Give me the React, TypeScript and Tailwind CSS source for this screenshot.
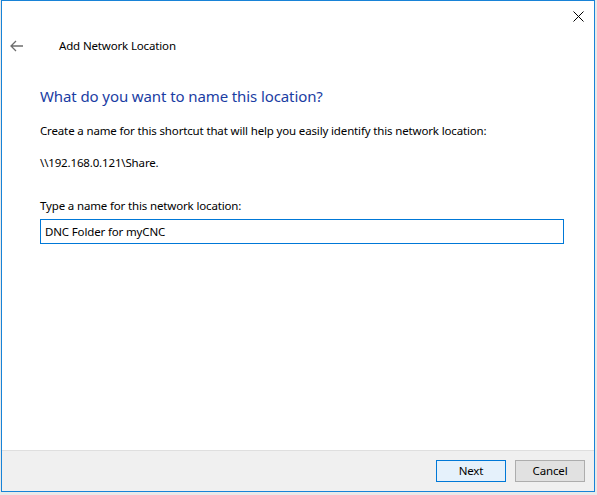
import React, { useState } from 'react';

const font = { fontFamily: '"Noto Sans", "Open Sans", sans-serif' };

const App: React.FC = () => {
    const [locationName, setLocationName] = useState('DNC Folder for myCNC');

    return (
        <div className="w-[597px] h-[495px] bg-[#e9e9e9] overflow-hidden" style={font}>
            <div className="ml-[1px] w-[594px] h-[492px] border border-[#1883d7] bg-white flex flex-col">
                {/* title bar */}
                <div className="h-[29px] flex justify-end items-start">
                    <button className="w-[30px] h-[28px] mt-[1px] mr-[1px] flex items-center justify-center text-black">
                        <svg width="11" height="11" viewBox="0 0 11 11">
                            <path d="M0.5 0.5 L10.5 10.5 M10.5 0.5 L0.5 10.5" stroke="#000" strokeWidth="1" />
                        </svg>
                    </button>
                </div>

                {/* header */}
                <div className="h-[31px] flex items-center">
                    <div className="w-[57px] pl-[8px] flex items-center">
                        <svg width="14" height="12" viewBox="0 0 14 12">
                            <path d="M1 6 H13 M6 1 L1 6 L6 11" stroke="#6d6d6d" strokeWidth="1.3" fill="none" />
                        </svg>
                    </div>
                    <span className="text-[11.5px] tracking-[-0.15px] leading-4 text-black">Add Network Location</span>
                </div>

                {/* content */}
                <div className="flex-1 pl-[38px] flex flex-col text-[11.5px] tracking-[-0.15px]">
                    <h1 className="mt-[24px] text-[15px] tracking-[-0.1px] leading-[22px] text-[#1a3da3]">What do you want to name this location?</h1>
                    <p className="mt-[16px] leading-4 text-black">
                        Create a name for this shortcut that will help you easily identify this network location:
                    </p>
                    <p className="mt-[16px] leading-4 text-black">\\192.168.0.121\Share.</p>

                    <label className="mt-[27px] leading-4 text-black">Type a name for this network location:</label>
                    <input
                        type="text"
                        value={locationName}
                        onChange={e => setLocationName(e.target.value)}
                        className="mt-[5px] w-[524px] h-[25px] border border-[#0078d7] px-[4px] text-[11.5px] tracking-[-0.15px] text-black outline-none"
                        style={font}
                    />
                </div>

                {/* footer */}
                <div className="h-[41px] border-t border-[#dfdfdf] bg-[#f0f0f0] flex justify-end items-start pt-[9px] pr-[9px] gap-[9px] text-[11.5px] tracking-[-0.15px]">
                    <button className="w-[70px] h-[22px] border border-[#0078d7] bg-[#e5f1fb] text-black">Next</button>
                    <button className="w-[70px] h-[22px] border border-[#adadad] bg-[#e1e1e1] text-black">Cancel</button>
                </div>
            </div>
        </div>
    );
};

export default App;
